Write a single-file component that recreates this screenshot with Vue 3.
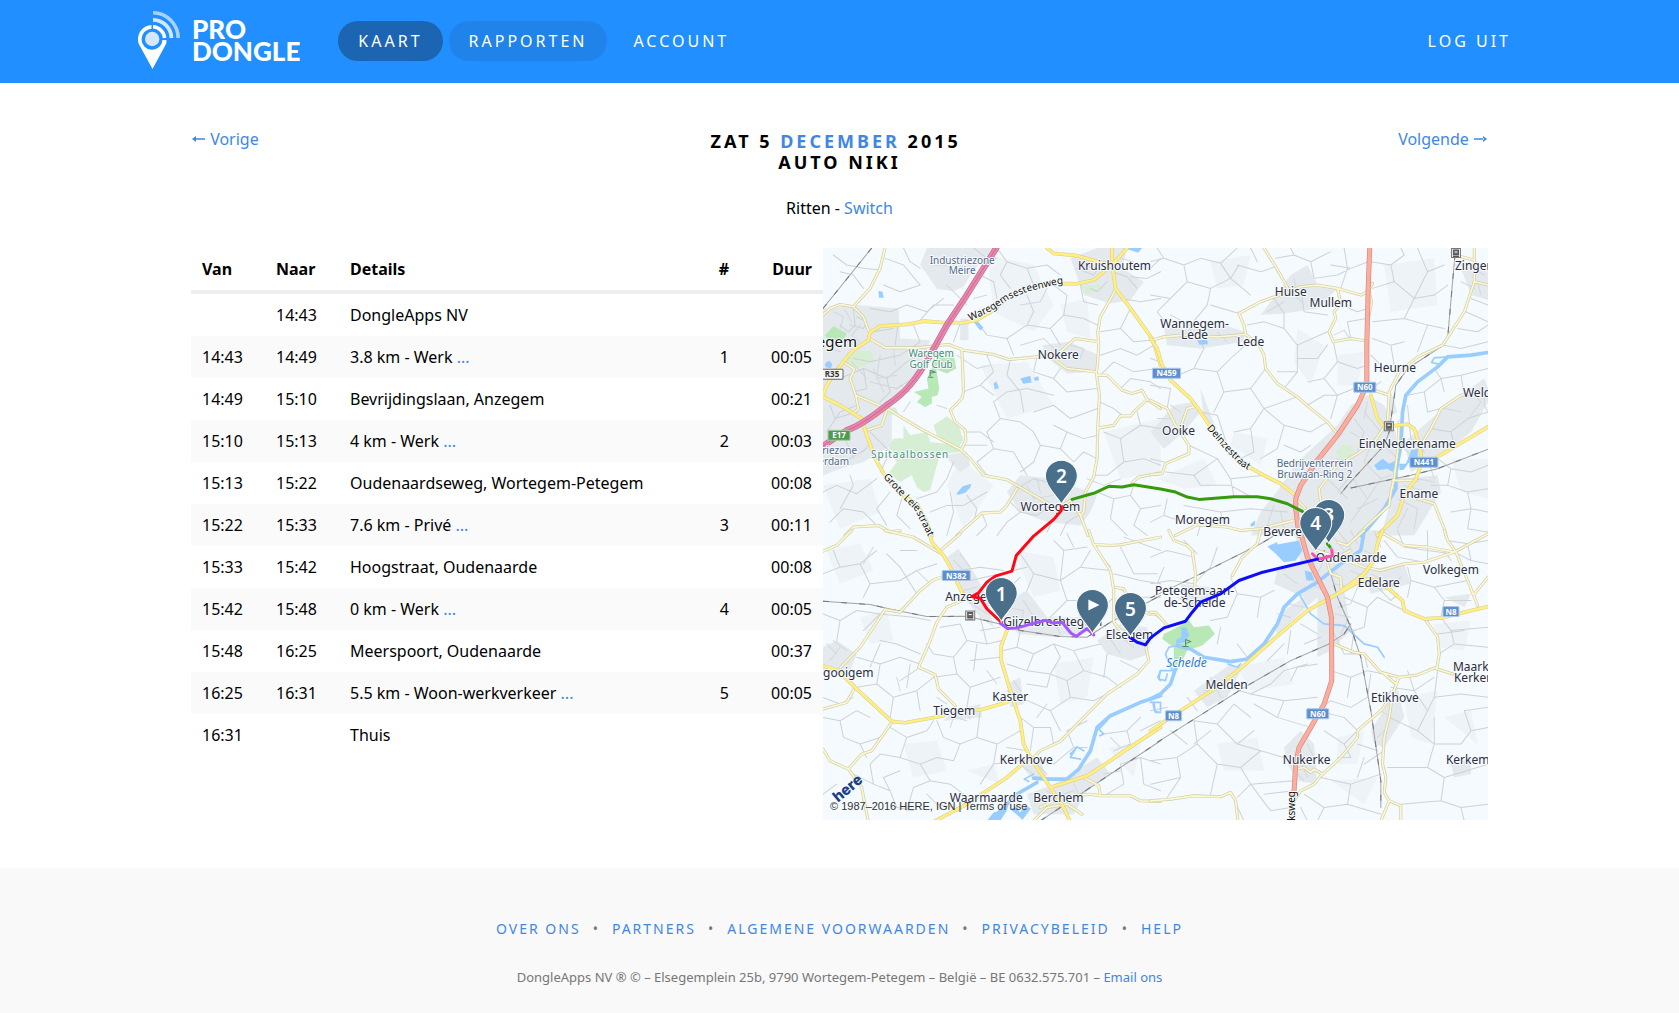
<script setup>
const trips = [
  { from: '', to: '14:43', text: 'DongleApps NV', n: '', time: '' },
  { from: '14:43', to: '14:49', text: '3.8 km - Werk', more: true, n: '1', time: '00:05' },
  { from: '14:49', to: '15:10', text: 'Bevrijdingslaan, Anzegem', n: '', time: '00:21' },
  { from: '15:10', to: '15:13', text: '4 km - Werk', more: true, n: '2', time: '00:03' },
  { from: '15:13', to: '15:22', text: 'Oudenaardseweg, Wortegem-Petegem', n: '', time: '00:08' },
  { from: '15:22', to: '15:33', text: '7.6 km - Privé', more: true, n: '3', time: '00:11' },
  { from: '15:33', to: '15:42', text: 'Hoogstraat, Oudenaarde', n: '', time: '00:08' },
  { from: '15:42', to: '15:48', text: '0 km - Werk', more: true, n: '4', time: '00:05' },
  { from: '15:48', to: '16:25', text: 'Meerspoort, Oudenaarde', n: '', time: '00:37' },
  { from: '16:25', to: '16:31', text: '5.5 km - Woon-werkverkeer', more: true, n: '5', time: '00:05' },
  { from: '16:31', to: '', text: 'Thuis', n: '', time: '' }
]

const footerLinks = ['Over ons', 'Partners', 'Algemene voorwaarden', 'Privacybeleid', 'Help']

// The map is split in four sheets, drawn at three units per pixel.
const NW = [-9, -9]
const NE = [981, -9]
const SW = [-9, 846]
const SE = [981, 846]

const sheets = [
  {
    at: NW,
    relief: 'M500 30L640 60 700 180 640 260 520 200ZM480 360L620 350 700 480 560 520ZM850 560L1020 520V680L900 700ZM9 720L150 700 180 800 60 850ZM420 640L520 720 430 850 380 720ZM720 180L800 160 810 280 740 260Z',
    urban: 'M320 9H520L460 75 430 125 400 138 350 132 325 95 300 60ZM9 190L110 180 235 190 240 280 330 285 300 380 250 420 215 470 215 600 130 650 60 670 9 690ZM750 40L830 9 920 9 905 70 970 110 930 165 870 175 790 150ZM665 300L745 290 835 330 830 380 740 385 690 345ZM560 740L600 690 700 700 830 750 810 800 780 840 680 830 600 800ZM420 220h25v65h-25zM370 630L440 620 450 660 420 680Z',
    wood: 'M250 540L270 570 320 560 330 590 420 600 425 620 360 625 350 660 330 735 310 740 290 725 275 690 240 710 205 685 230 650 205 610 220 580 250 580ZM340 540L380 513 415 540 430 585 410 610 350 570ZM80 320L150 315 165 350 110 370 75 355ZM190 495L225 485 235 505 200 510ZM785 125L830 118 850 130 800 145Z',
    park: 'M340 320L400 325 408 370 380 385 348 372 357 430 352 450 335 455 335 475 315 485 290 470 305 455 282 440 325 430 320 400 335 370ZM15 270L40 243 80 265 70 285 30 287Z',
    water: 'M175 138l12 2 4 18-14 0zM460 230l10-4 20 22-10 8zM520 415l8-7 8 20-12 5zM600 400l30-8 4 20-25 4zM640 398l14-5 2 12-12 2zM408 745l20-22 25-8-3 12-15 15-20 6zM15 355l12-8 10 10-5 12-15-3zM905 9h60l-12 14-25-8z',
    river: '',
    minor: 'M60 80L100 90 130 130M40 30L80 60 130 70 180 75M195 40L250 60 300 120 240 140 190 120M250 9L270 50 300 70M100 190L105 240 85 260 60 240M110 215L140 230 130 250 90 240M150 190L210 200 260 180 320 200 370 160M235 230L225 300M160 260L220 250M280 240L300 290 240 330 150 350 100 340M60 400L130 370 200 400 260 350 300 330M130 370L140 430 100 440M200 400L210 440 180 470M150 410L230 430 280 400M110 480L60 500 20 560M30 480L45 520 110 500M150 560L210 620 180 680M20 660L90 640 140 610M9 740L50 720 110 745 170 700M60 790L100 720 90 690M30 830L70 790 130 800 170 840M210 740L170 790 200 840M245 760L230 810 270 850M290 760L350 740 380 700 400 650M330 800L380 780 430 780 500 740M380 870L400 800 390 740M440 750L470 790 460 830M500 690L470 650 520 610 500 560 540 520 600 530 640 560M520 610L580 620 620 690M430 560L480 560 520 590M435 600L500 600M540 520L520 470 560 440 620 430 700 450M430 440L480 420 520 380 500 330M480 420L520 450M570 345L560 390 600 440 610 500M650 335L640 380 700 400 740 440 828 430M700 400L720 370M640 500L700 480 750 520 832 490M640 560L660 600 720 610 740 560 700 540M740 560L790 580 832 570M660 600L640 650 600 680M720 610L760 650 790 620 830 640M700 700L740 650M530 9L560 50 620 70 680 60 720 90M560 50L540 90 570 130M620 70L640 120M480 90L520 110 530 160M460 9L500 40 530 40M400 180L340 180 300 225M420 235L400 290M470 230L500 270 560 280 620 240 640 200 620 150M560 280L580 330M620 240L690 250 720 300M690 250L730 210 740 150 700 120M730 210L790 220 832 240M780 120L790 170 832 180M840 60L820 90 770 70M875 80L920 95 950 130M860 110L830 140 810 130M920 60L990 70 1020 40M930 95L980 100 1020 80M900 160L960 170 1020 160M930 190L900 250 840 260M900 250L940 290 990 285M840 330L900 310 950 330 1000 300M840 390L880 350 940 380 1010 370M900 430L930 400 990 410 1020 430M837 470L880 490 905 510M850 560L900 580 960 540 1020 550M900 580L910 650 860 690 825 690M910 650L970 640 1020 660M960 540L950 500M830 740L880 760 930 750 960 790 1020 780M930 750L940 720M880 760L870 820 920 870M960 790L940 840 980 870M790 800L740 830 720 870M690 780L650 810 600 800 560 830 530 870M485 803L500 840 470 870M590 730L640 700 680 710M600 800L570 770M700 820L680 860',
    minorB: 'M40 200L70 215 60 250M75 195L95 230M120 240L95 270 120 290M30 310L60 320M95 350L140 400M160 370L190 440M180 330L170 400 230 390M220 310L225 360M240 420L270 440M45 560L80 590 100 640M150 590L130 620M340 60L380 60M350 300L370 250M410 330L470 370 510 360M350 480L380 490M250 500L270 470M780 50L830 80M800 40L790 80M900 40L940 50M700 310L670 280 600 300M750 300L790 310 780 340M620 720L640 760 700 750M650 700L660 740M750 730L730 760M800 700L850 720 900 700M600 180L660 170 680 130M380 120L440 180M460 160L500 150',
    local: 'M195 9L180 70 150 130 100 185 60 178 30 190 9 210M100 185L130 215 148 262M148 280L195 308 290 308 385 298 430 315 520 328 565 343 650 335 700 330M425 315L430 440 425 460 390 495 405 530 435 555 437 585 425 610M107 450L200 490 300 550 420 612 450 640 490 690 560 703 590 720 690 778M70 350L103 372 90 400 107 450 115 490 100 505M200 495L185 540 140 555M885 135L840 215 832 260 835 300 832 350 828 385 837 450 832 550 830 640 820 695 795 740 790 800 780 810L750 765 725 780M780 810L803 870M835 290L765 280 720 320 705 345 740 370 828 380M828 390L860 390 905 435 935 445 965 435 980 462 940 500 930 512 900 512 880 540 835 548M980 462L1020 490M590 730L560 780 540 800 485 803 410 870M75 870L100 845 175 840 210 860 240 855M935 712L955 695 1020 683',
    main: 'M680 9L700 25 770 32 840 52 875 60L820 105 770 116 690 115 600 140 560 160 520 195 470 225 430 233 360 232 310 228 260 238 180 243 150 262 145 285 100 315 70 350 40 390 20 420 9 450M875 9V55L885 130 930 190 998 285 1020 360M920 9L875 60M9 455L60 480 125 520 140 570 165 640 200 700 240 745 290 775 320 830 335 870',
    motor: 'M528 9L430 165 380 240 330 330C290 400 260 440 200 480C150 520 110 545 80 555L9 602',
    trunk: '',
    rail: 'M155 9L9 190'
  },
  {
    at: NE,
    relief: 'M440 250L520 300 480 420 430 350ZM180 50L300 30 280 120 200 130ZM700 60L850 40 860 180 720 200ZM250 560L350 580 330 660 240 600ZM900 640L1011 640V760L930 740ZM20 700L160 640 200 720 100 730ZM560 330L640 320 620 420 560 420Z',
    urban: 'M330 210L420 90 470 60 500 120 560 130 500 190 400 205ZM385 730L440 650 560 540 600 480 650 450 700 480 735 560 740 640 730 740 640 870 300 870 330 800ZM40 250L220 240 280 260 280 290 150 310 50 300ZM720 440L740 500 700 520ZM0 560L70 480 130 470 150 500 100 560 40 610ZM760 590L900 470 1000 400 1011 430V470L960 560 860 640 780 680ZM740 700L860 690 870 740 790 870H690ZM930 70L1011 60V165L960 150ZM150 430L200 560 160 520Z',
    wood: 'M555 620L580 597 608 605 605 635 570 648Z',
    park: '',
    water: 'M670 660l25-20 20 15 20-10 10 20-15 5-5 10-15-10-30 5zM745 655l20 0 16-40 20-5 0 25-28 18-15 20-12 2zM140 285l30-2 2 14-25 2zM300 835l14-10-2 15-12 4z',
    river: 'M1011 322L960 330 890 335 860 365 800 410 765 450 755 500 750 600 735 680 735 730 700 790 650 850 630 870',
    stream: 'M890 335L850 338 842 352 860 356',
    minor: 'M0 50L40 40 100 60 150 40 210 55 260 9M40 40L20 9M100 60L110 110 60 160 20 200M110 110L180 130 240 100 265 60M180 130L170 180 120 240M240 100L300 150M210 55L240 100M260 60L330 80 375 65M300 9L320 50M375 40L430 30 480 50 540 20M480 50L490 100M420 9L430 30M540 60L600 70 652 50M490 100L560 90 600 70M580 9L590 70 570 130M20 200L60 250M120 240L60 210M180 180L265 205M0 150L60 160M290 240L340 230 400 250 440 300 530 260M400 250L400 205 370 160M440 300L440 380 400 430M440 380L380 380M530 300L500 340 440 340M548 290L560 350 620 370 648 360M560 350L520 400 470 410M520 400L560 450 610 430M470 480L520 450 560 450M560 450L540 520M570 180L620 200 650 190M450 130L460 200 530 210M600 280L590 230 648 220M60 400L130 370 160 310 150 290M130 370L200 380 240 340 285 300M200 380L220 440 190 500M220 440L300 430 345 370M300 430L340 490 300 550 250 560M340 490L440 455M340 490L400 540 380 610 330 640M400 540L480 560 530 530M300 550L310 620 270 640M400 600L450 620 480 600M0 340L30 350M0 420L60 430 50 490M150 500L200 510 230 600M115 600L200 640 240 700 340 690M200 640L130 690 45 680M130 690L150 720 240 720 300 754M240 700L250 754M0 640L40 650M50 760L40 810 100 830M40 810L0 830M100 780L210 800 300 790 410 800M210 800L220 840M150 840L140 870M660 50L720 60 760 30 750 9M720 60L730 110 665 130M730 110L790 160 760 220 665 230M790 160L850 150 890 120M760 220L830 240 880 250M830 240L800 320M665 280L720 300 760 290M720 300L730 360M880 60L830 80 790 160M830 80L800 9M960 60L910 60M960 160L1011 180M945 200L1011 230M920 250L980 260 1011 240M880 300L930 310 1011 290M660 330L700 370M690 410L660 430M770 450L820 440 870 400 850 370M820 440L830 500 870 490M870 400L930 390 1011 370M930 390L940 450M880 440L870 400M840 550L900 560 950 520 1011 500M900 560L910 600M860 640L900 670 960 680 1011 660M900 670L890 720 840 720M890 720L950 740 1011 730M950 740L960 790 900 800M960 790L1011 800M960 790L950 850 1011 860M820 620L780 580 770 480',
    minorB: 'M610 520L640 560 620 620M640 500L690 560M600 560L660 600 640 650M650 470L640 520M560 640L600 690 560 740M640 650L690 700 650 760M600 690L650 760 600 830M530 700L590 760M480 700L500 640M450 700L400 690M620 790L680 760M690 700L720 690M700 600L740 640M760 610L790 640M830 640L850 700M760 720L830 740M740 760L800 790 790 850M800 700L850 710M770 790L740 850M430 100L440 150M400 110L450 170M350 200L400 170M950 60L1000 90M980 110L990 150M930 110L970 130M550 270L580 255 600 285M110 240L130 270M200 260L230 290M60 480L90 500M20 520L60 520M880 490L930 500M960 440L990 470 960 510M1000 440L1000 480 1011 500M400 850L390 800M350 840L370 780',
    local: 'M340 9L375 65 415 135M265 205L330 170 380 152 450 125 500 120 560 130 630 150 650 140 665 115M560 130L570 175 550 200 555 220 535 260 548 290 600 280 648 288M265 205L280 240 285 268 200 275 100 270 40 275 5 285M285 268L325 300 340 330 345 370 380 415 440 455 480 490 530 530 555 560M655 140L662 170 655 210M970 9L970 110 940 200 875 300 800 335 745 380 715 440 710 530M670 435L715 450M970 110L1011 120M700 545L670 590 620 625 560 660 505 730 510 770M1011 435L930 450 870 490 840 550 810 600M745 530L740 620 730 700 720 740 715 780 650 840 620 870M725 705L800 705M800 760L850 775 880 850 885 870M0 465L50 490 75 540 115 600 115 625 45 655 35 685 0 688M130 485L110 490 90 545M75 870L140 838 230 845 270 855 330 850 430 825M970 45L930 35M435 760L465 790',
    main: 'M0 280L20 310 35 360 60 405 120 460 150 500 180 545 230 610 260 645 340 690 390 715 435 750M660 450L680 520 700 545 770 537 790 550 803 590 810 625 810 660 795 700 760 750 740 810 680 870M1011 545L860 635',
    motor: '',
    trunk: 'M657 0L652 130 648 300 648 420 620 480 560 570 500 645 450 720 435 760 435 790 445 870',
    rail: 'M912 30L890 280 870 305 770 370 735 420 715 560 700 600 590 720 570 745M600 728L780 690 860 670 1011 612'
  },
  {
    at: SW,
    relief: 'M20 60L120 40 160 120 60 160ZM580 60L700 80 720 180 640 200ZM700 400L820 380 800 500 720 520ZM250 640L350 630 380 720 280 740ZM860 650L960 640 940 740ZM440 720L520 700 540 760ZM120 260L200 240 220 330 150 340Z',
    urban: 'M380 80L415 55 470 140 500 200 520 290 480 260 430 200 400 150ZM560 210L620 180 680 260 800 260 830 300 700 320 600 310 540 280ZM830 330L900 280 980 290 985 370 930 390 860 370ZM9 350L50 330 110 370 90 420 9 420ZM400 540L480 520 485 560 370 570ZM560 460L600 440 610 520 570 530ZM620 790L700 760 830 680 870 730 800 780 760 850H640ZM600 700L660 690 680 740 640 750Z',
    wood: '',
    park: '',
    water: 'M500 870l20-25 20-5 10-20 15-2-5 20-20 32zM570 835l20-8 8 18 20-20 14 8-25 34z',
    river: 'M1020 495L960 515 870 555 830 590 810 660 775 715 740 745 680 745 640 742M650 755L590 790 520 860',
    stream: 'M640 730L612 745 625 752M860 570L835 595 850 610 838 615M750 670L770 648 790 660M770 648L750 680 780 685M1000 515L1005 545 1020 545M1020 420L1012 440 1020 450',
    minor: 'M9 130L60 110 120 100 170 60M120 100L150 160 240 150 290 120M150 160L130 200M60 110L40 60M290 120L350 100M200 70L240 110 290 190 240 240M240 60L290 60M9 250L60 270 110 240 180 250M60 270L50 330M130 300L180 250 280 260 330 270M180 330L230 340 300 370M110 380L180 400 240 380 300 400M180 400L170 460 220 500 290 480 340 440M170 460L110 470M220 500L210 560M290 480L300 540M270 400L260 470M300 410L240 450M340 440L410 430 450 470 540 440M410 430L400 380 440 330 420 280M440 330L500 340 545 330M400 380L340 370 320 340M360 290L420 280M450 470L440 530M450 390L540 380M480 260L500 340M470 340L460 420M550 120L480 110 420 120M600 70L640 130 720 150 780 110 810 60M640 130L620 180M720 150L730 60 700 30M730 60L800 50M740 9L760 50M580 120L620 110M720 150L740 210 690 260M740 210L820 210M780 110L870 120M880 200L830 250M600 300L590 350 550 360M590 350L640 370 700 340 720 380 690 430 620 420 560 400M640 370L620 420M700 340L760 360 840 340M760 360L790 420 740 450 690 430M790 420L860 440 900 470M740 450L750 500 690 540 600 500M690 540L720 600M750 500L820 510 860 490M620 460L680 470 690 430M600 560L640 590 690 590 700 640M640 590L630 660M860 370L850 440M900 390L960 420M910 20L1020 60M830 60L870 110M900 50L940 130 1010 130M880 130L960 150 1020 160M890 170L940 200 1020 200M9 560L60 570 110 540 150 560M60 570L70 620 120 640 140 680M120 640L180 620M9 500L60 520 100 500M210 590L260 620 320 600 340 570M260 620L240 680 300 700 330 750M240 680L180 670 150 700 160 760M300 700L350 680 400 690 420 640 370 620 350 570M420 640L470 620 480 540M470 620L530 640 600 600M530 640L520 700 480 760M520 700L600 690M330 750L280 770 260 840M330 750L390 760 430 790M160 760L210 780 230 830 280 840M210 780L190 740 240 720M100 730L160 760M9 790L50 760M620 660L560 650M700 700L760 650 740 600 800 570M760 650L800 650M850 610L920 600 960 560M920 600L930 640 880 660M960 600L1020 570M900 700L960 680 1020 700M900 700L910 760 860 790M960 680L970 760 1020 780M850 730L900 720M540 290L480 300M560 180L600 140M450 150L540 130M180 340L150 410',
    minorB: 'M20 340L50 370M40 330L80 360M60 350L30 390M400 90L440 130M420 70L450 110M430 180L470 170M440 210L500 250M560 230L610 240 600 280M610 210L640 260M700 270L720 310M860 310L900 370M880 300L940 350M370 550L440 570M420 530L450 565M400 560L390 590M560 480L590 500M580 450L600 480M640 790L680 820M680 780L730 820M760 760L780 800M700 800L760 780M650 700L680 730M610 710L640 730M290 120L330 160M130 100L160 50M240 480L230 440M350 500L380 520M500 420L530 460M650 560L680 520M870 620L900 650M320 790L350 820 400 830',
    local: 'M195 0L280 20 355 65M355 65L420 10M9 62L50 45 95 0M365 140L340 148 300 180 240 245 195 237 160 290 120 350 60 412M440 205L380 230 350 275 330 330 295 410 345 432 355 475 405 525M805 0L820 42 870 45 900 43 1020 20M820 42L870 120 880 180 880 275 900 300 935 310M885 170L910 175 925 210M945 225L985 250 1005 250 1020 262M975 343L985 390 950 430 860 490 800 550 720 632 660 660 640 680M9 535L80 515 105 470M215 575L155 660 125 670 85 715 30 690 9 655M85 715L125 770 140 850 145 870M790 740L835 765 840 795 810 790 720 800 660 830M840 795L930 795 960 810 1020 812M560 290L543 275M640 870L680 830 740 820 785 850',
    main: 'M325 0L335 35 370 75 390 110 425 185 440 205M560 300L543 345 543 390 570 480 600 570 610 640 630 680 690 770 730 830 748 870M9 405L55 420 105 470 215 572 255 576 370 555M465 538H480L560 515M630 680L560 740 500 780 430 825 345 870M690 770L800 735 870 690 920 655 1020 590',
    motor: '',
    trunk: '',
    rail: 'M9 212L150 222 230 240 320 258 440 257 540 280 600 300 720 318 800 320 870 275 1020 195M660 870L1020 630'
  },
  {
    at: SE,
    relief: 'M760 500L860 480 840 640 780 620ZM560 620L640 600 620 700 560 700ZM200 640L320 620 340 720 220 720ZM880 560L960 540 980 640ZM260 410L400 380 430 460 300 480ZM850 280L960 270 940 360 860 350ZM540 750L680 740 640 820Z',
    urban: 'M430 0H700L660 100 640 150 580 180 600 300 540 360 500 380 500 200 380 310 370 290 400 240 460 200 370 160 380 120 450 100ZM130 480L240 400 270 420 230 500 170 530ZM400 650L450 600 490 640 500 760 440 750 410 700ZM660 600L740 470 760 560 700 650 670 640ZM640 120L760 100 780 160 660 190ZM880 200L960 190 940 230ZM900 700L960 680 960 730 910 740ZM90 160L180 170 200 210 110 240Z',
    wood: '',
    park: 'M40 310L80 290 115 268 130 290 175 285 193 310 155 345 110 360 80 420 70 390 70 350 35 325Z',
    water: 'M350 48L380 35 380 42 445 30 455 60 435 90 400 95 375 70ZM462 120l20 5 10 25-25 0zM92 290l15 0 10 25-15 20-25 5 0-12 15-8z',
    river: 'M640 0L630 60 570 100 500 155 440 190 400 230 380 280 340 340 290 385 240 393 160 380 120 355 80 345M75 415L60 460 30 490 0 505',
    stream: 'M445 190L480 250 520 280 580 285 640 340 680 350 700 380M80 345L55 350 45 370 60 410 70 420 30 420 25 445 45 450 50 430M232 400L260 410 270 400M0 515L30 515 30 540M8 520L12 540 25 545',
    minor: 'M100 30L140 70M0 80L50 60 130 80M240 140L260 190 230 260 180 270M260 190L330 200 370 180M330 200L320 260M200 50L180 110 140 150M40 110L20 160M0 160L60 150 130 160M210 290L200 340M290 380L260 340M200 460L300 490 400 510 500 500M300 490L360 460 400 420 470 400M400 510L380 560 480 590M380 560L310 520M300 560L250 520M250 520L200 580 130 570M200 580L260 640 400 680M260 640L310 600M130 570L140 640 80 680 0 690M140 640L200 700 180 790M80 680L90 740 50 800M90 740L0 760M200 700L270 710 300 760 430 750M270 710L330 660M300 760L260 800M300 760L360 840 420 830M180 600L130 640M60 600L110 640M110 500L140 540M0 540L50 530M500 400L440 410 420 450M500 540L580 560 620 600M500 540L540 510 600 530 650 500 660 430M540 420L600 440 650 420 700 430M600 440L590 500M560 280L610 300 640 290M545 300L580 370 640 370M640 370L650 410M580 200L650 230 680 200 760 240M650 230L640 290M680 170L720 210 740 190M750 140L720 170M770 110L780 150 850 170 950 150M780 150L770 200M850 170L880 210 870 260 830 270M880 210L960 210M700 30L740 80 820 95M740 0L760 50 830 60M830 60L900 70M830 0L830 95M890 30L950 40 1011 30M950 40L960 90 910 65M960 90L1011 100M900 90L880 60M940 300L860 310M870 260L900 300 1011 290M900 300L910 340 1011 350M910 340L865 370M850 500L860 420M720 470L790 480 850 440M790 480L830 540 850 500 930 490 1011 500M830 540L800 600 715 560M800 600L850 640 930 640M850 640L850 560M850 640L830 710 880 740 1011 700M830 710L710 710M880 740L870 810 750 820M870 810L930 830 1011 820M930 830L940 870M930 640L960 600 1011 590M960 600L940 540 1011 530M620 640L680 660M620 600L580 640 600 680M580 640L520 600M510 740L600 760 690 730M600 760L590 820 690 850M590 820L520 830 500 870M520 830L460 790M240 785L280 870M430 780L340 790M450 830L470 870M640 680L620 740M700 660L640 700M560 680L600 680M770 420L790 480M600 370L610 300M450 280L500 310M460 340L510 320M380 250L420 260M400 340L350 390M420 300L410 370',
    minorB: 'M540 10L580 60M560 0L600 50 560 90M600 0L620 40M520 50L560 70M520 90L500 130M480 160L520 180M550 160L600 170M530 110L560 130M560 230L600 220 620 170M550 250L600 260M590 270L570 310M640 60L680 80M660 130L700 150 690 180M600 120L640 140M400 130L440 160M410 220L460 230M450 690L470 740M440 730L460 750M470 640L490 680M720 480L700 520M690 540L720 560M700 600L680 620M160 480L220 470M180 440L210 500M100 180L170 230M80 200L130 230M670 0L690 50',
    local: 'M125 60L135 130 132 170M245 135L275 80 320 40 330 0M55 0L70 30 110 45 125 60M0 245L15 245 55 290M545 338L610 365 640 370 690 425 745 440 800 433 850 412 905 430M825 270L860 320 865 370 858 412M745 440L725 490 715 560 700 620 695 700 705 740 700 785 715 810 690 870M715 810L750 825 750 870M700 430L735 460 745 440M720 500L690 540 620 600 620 620 570 680 510 735 490 760 450 780 430 810M435 715L460 710 480 725 490 715 515 730M640 110L690 120 760 100 820 95 910 65 1011 10M880 0L890 30 915 65 950 150 980 225M690 5L760 45 830 50 910 65M970 190L1011 140M0 810L60 805 130 795 210 798 240 785 255 810 262 870M530 100L540 130 570 140 572 185M560 35L590 45 640 0M560 80L600 60M500 60L560 80 640 110',
    main: 'M695 0L680 40 670 90 640 130 560 190 470 240 370 325 280 405 190 475 90 540 0 600M560 190L640 145 680 150 720 180 755 210 760 240 820 265 870 262 1011 228',
    motor: '',
    trunk: 'M448 0L470 80 530 200 542 260 543 450 520 520 480 590 445 650 435 700 430 780 420 870',
    rail: 'M0 202L130 140 330 40 380 10M20 635L290 465 420 390 535 340 580 310 600 280M520 60L560 200 600 290 630 380 660 540 690 750 690 830'
  }
]

const place = (items) =>
  items.map(([at, x, y, text, kind, side]) => ({
    x: Math.round((x + at[0]) / 3),
    y: Math.round((y + at[1]) / 3),
    text,
    kind,
    side
  }))

const labels = place([
  [NW, 427, 56, 'Industriezone', 'zone'],
  [NW, 427, 88, 'Meire', 'zone'],
  [NW, 881, 74, 'Kruishoutem', 'town'],
  [NW, 713, 342, 'Nokere', 'town'],
  [NW, 112, 305, 'egem', 'city', 'end'],
  [NW, 334, 335, 'Waregem', 'green'],
  [NW, 333, 368, 'Golf Club', 'green'],
  [NW, 271, 638, 'Spitaalbossen', 'green wide'],
  [NW, 112, 627, 'riezone', 'zone', 'end'],
  [NW, 86, 660, 'erdam', 'zone', 'end'],
  [NW, 690, 797, 'Wortegem', 'town'],
  [NE, 421, 152, 'Huise', 'town'],
  [NE, 541, 187, 'Mullem', 'town'],
  [NE, 131, 249, 'Wannegem-', 'town'],
  [NE, 132, 283, 'Lede', 'town'],
  [NE, 301, 302, 'Lede', 'town'],
  [NE, 731, 381, 'Heurne', 'town'],
  [NE, 936, 455, 'Weld', 'town', 'start'],
  [NE, 913, 74, 'Zingem', 'town', 'start'],
  [NE, 83, 569, 'Ooike', 'town'],
  [NE, 661, 608, 'Eine', 'town'],
  [NE, 805, 608, 'Nederename', 'town'],
  [NE, 493, 666, 'Bedrijventerrein', 'zone'],
  [NE, 491, 698, 'Bruwaan-Ring 2', 'zone'],
  [NE, 805, 758, 'Ename', 'town'],
  [NE, 155, 836, 'Moregem', 'town'],
  [NE, 395, 872, 'Bevere', 'town'],
  [SW, 375, 209, 'Anzegem', 'town', 'start'],
  [SW, 550, 284, 'Gijzelbrechtegem', 'town', 'start'],
  [SW, 928, 323, 'Elsegem', 'town'],
  [SW, 10, 437, 'gooigem', 'town', 'start'],
  [SW, 403, 551, 'Tiegem', 'town'],
  [SW, 570, 511, 'Kaster', 'town'],
  [SW, 619, 700, 'Kerkhove', 'town'],
  [SW, 498, 814, 'Waarmaarde', 'town'],
  [SW, 714, 814, 'Berchem', 'town'],
  [SE, 131, 192, 'Petegem-aan-', 'town'],
  [SE, 132, 227, 'de-Schelde', 'town'],
  [SE, 107, 409, 'Schelde', 'stream-name'],
  [SE, 228, 473, 'Melden', 'town'],
  [SE, 494, 95, 'Oudenaarde', 'town', 'start'],
  [SE, 684, 169, 'Edelare', 'town'],
  [SE, 899, 131, 'Volkegem', 'town'],
  [SE, 907, 419, 'Maarke-', 'town', 'start'],
  [SE, 909, 453, 'Kerkem', 'town', 'start'],
  [SE, 733, 512, 'Etikhove', 'town'],
  [SE, 469, 700, 'Nukerke', 'town'],
  [SE, 886, 700, 'Kerkem', 'town', 'start']
])

const shields = place([
  [NE, 48, 384, 'N459', 'n'],
  [NE, 643, 426, 'N60', 'n'],
  [NE, 818, 651, 'N441', 'n'],
  [SW, 408, 135, 'N382', 'n'],
  [SE, 70, 556, 'N8', 'n'],
  [SE, 501, 549, 'N60', 'n'],
  [SE, 901, 243, 'N8', 'n'],
  [NW, 35, 387, 'R35', 'r'],
  [NW, 56, 571, 'E17', 'e']
]).map((s) => ({ ...s, w: s.text.length * 6 + 4 }))

const stations = place([
  [NE, 915, 24],
  [NE, 714, 542],
  [SW, 450, 255]
])

const pins = place([
  [NW, 723, 775, '2'],
  [SW, 543, 270, '1'],
  [SW, 816, 305, ''],
  [SW, 930, 314, '5'],
  [SE, 533, 35, '3'],
  [SE, 495, 60, '4']
])

const routes = [
  { at: NW, color: '#359b0c', d: 'M755 762L825 742 865 723 905 725 940 718 1020 731 1065 740 1100 755 1135 762 1240 754 1310 754 1350 760 1400 775 1445 798' },
  { at: NW, color: '#ff0a14', d: 'M723 782V795L700 822 640 872 588 930 575 977 525 992 500 1010 475 1042 455 1053 480 1058 500 1090 543 1130' },
  { at: SW, color: '#a657ff', d: 'M540 278L562 294 590 292 675 269 695 277 725 275 752 308 768 317 800 294 820 313' },
  { at: SE, color: '#ff4fae', d: 'M485 70L500 85 510 85 545 75 543 58' },
  { at: SE, color: '#359b0c', d: 'M530 40L538 50' },
  { at: SW, color: '#0c0cff', d: 'M928 320L950 335 975 343 990 322 1030 292 1095 272 1115 245 1140 215 1200 190 1255 150 1320 127 1410 105 1490 86' }
]

const move = (at) => `translate(${at[0]} ${at[1]})`
</script>

<template>
  <div class="page">
    <header class="top">
      <div class="top-inner">
        <a class="logo" href="#" aria-label="Pro Dongle">
          <svg width="42" height="58" viewBox="0 0 42 58" aria-hidden="true">
            <path d="M15 1.800A25.500 25.500 0 0 1 40.200 27" fill="none" stroke="#a6d2ff" stroke-width="3.600" />
            <path d="M15 8.800A18.500 18.500 0 0 1 33.400 27" fill="none" stroke="#d3e8ff" stroke-width="3.800" />
            <path d="M15 15.800A12.300 12.300 0 0 1 26.600 27" fill="none" stroke="#fff" stroke-width="3.600" />
            <path fill="#fff" fill-rule="evenodd" d="M13.500 14A14.200 14.200 0 0 0 .8 33L14.500 58 28 33Q28.800 31 28.300 29H24.500A10.500 10.500 0 1 1 13.500 17.800Z" />
            <circle cx="14.200" cy="28" r="7.200" fill="#d3e8ff" />
          </svg>
          <span class="logo-name">PRO<br />DONGLE</span>
        </a>
        <nav class="nav">
          <a class="pill current" href="#">Kaart</a>
          <a class="pill hover" href="#">Rapporten</a>
          <a class="pill" href="#">Account</a>
        </nav>
        <a class="pill logout" href="#">Log uit</a>
      </div>
    </header>

    <main class="content">
      <div class="day">
        <a class="step" href="#"><svg class="arrow" viewBox="0 0 15 12" aria-hidden="true"><path d="M5 3V9L1 6ZM4 5.200H14V6.800H4Z" /></svg> Vorige</a>
        <h1>Zat 5 <a href="#">december</a> 2015&nbsp;<br />Auto Niki</h1>
        <a class="step next" href="#">Volgende <svg class="arrow" viewBox="0 0 15 12" aria-hidden="true"><path d="M10 3V9L14 6ZM1 5.200H11V6.800H1Z" /></svg></a>
      </div>
      <p class="mode">Ritten - <a href="#">Switch</a></p>

      <div class="split">
        <table class="trips">
          <thead>
            <tr>
              <th class="time">Van</th>
              <th class="time">Naar</th>
              <th>Details</th>
              <th class="num">#</th>
              <th class="dur">Duur</th>
            </tr>
          </thead>
          <tbody>
            <tr v-for="(t, i) in trips" :key="i">
              <td>{{ t.from }}</td>
              <td>{{ t.to }}</td>
              <td>{{ t.text }} <a v-if="t.more" href="#">...</a></td>
              <td class="num">{{ t.n }}</td>
              <td class="dur">{{ t.time }}</td>
            </tr>
          </tbody>
        </table>

        <figure class="map">
          <svg class="map-art" viewBox="0 0 664 572" preserveAspectRatio="xMinYMin slice" role="img" aria-label="Kaart">
            <defs>
              <path id="way-waregem" d="M147 73L170 62 186 51 206 43 236 36 252 34" />
              <path id="way-leie" d="M60 229L78 248 92 262 104 286 113 306" />
              <path id="way-deinze" d="M383 180L403 203 418 218 440 230" />
            </defs>
            <g transform="scale(.333333)">
              <g v-for="(s, i) in sheets" :key="'g' + i" :transform="move(s.at)">
                <path class="relief" :d="s.relief" />
                <path class="urban" :d="s.urban" />
                <path class="wood" :d="s.wood" />
                <path class="park" :d="s.park" />
              </g>
              <g v-for="(s, i) in sheets" :key="'m' + i" :transform="move(s.at)">
                <path class="line minor" :d="s.minor" />
                <path class="line minor small" :d="s.minorB" />
                <path class="water" :d="s.water" />
                <path class="line river" :d="s.river" />
                <path class="line stream" :d="s.stream" />
                <path class="line rail" :d="s.rail" />
                <path class="line rail dash" :d="s.rail" />
              </g>
              <g v-for="(s, i) in sheets" :key="'r' + i" :transform="move(s.at)">
                <path class="line local-edge" :d="s.local" />
                <path class="line local" :d="s.local" />
                <path class="line main-edge" :d="s.main" />
                <path class="line main" :d="s.main" />
                <path class="line motor-edge" :d="s.motor" />
                <path class="line motor" :d="s.motor" />
                <path class="line motor-mid" :d="s.motor" />
                <path class="line trunk-edge" :d="s.trunk" />
                <path class="line trunk" :d="s.trunk" />
              </g>
            </g>

            <g v-for="(s, i) in stations" :key="'s' + i" :transform="`translate(${s.x} ${s.y})`">
              <rect x="-4.500" y="-4.500" width="9" height="9" fill="#eee" stroke="#777" />
              <path d="M-2.500-3H2.500V2H-2.500ZM-3 3.500H3" fill="#666" stroke="#555" />
              <path d="M-1.500-1H1.500" stroke="#fff" />
            </g>

            <text v-for="(l, i) in labels" :key="'l' + i" :class="['label', l.kind, l.side]" :x="l.x" :y="l.y">{{ l.text }}</text>
            <text class="label road"><textPath href="#way-waregem">Waregemsesteenweg</textPath></text>
            <text class="label road"><textPath href="#way-leie">Grote Leiestraat</textPath></text>
            <text class="label road"><textPath href="#way-deinze">Deinzestraat</textPath></text>
            <text class="label road" transform="translate(471 572) rotate(-90)">ksweg</text>

            <g v-for="(s, i) in shields" :key="'h' + i" :class="['shield', s.kind]" :transform="`translate(${s.x} ${s.y})`">
              <rect :x="-s.w / 2" y="-5" :width="s.w" height="10" rx="1" />
              <text y="3">{{ s.text }}</text>
            </g>

            <path d="M107 122V128M107 122L112 124 107 125M105 129H110" fill="none" stroke="#4f8f70" />
            <path d="M362 391V398M362 391L367 393 362 395M359 398H365" fill="none" stroke="#4f8f70" />

            <g transform="scale(.333333)">
              <path v-for="(r, i) in routes" :key="'t' + i" class="line route" :transform="move(r.at)" :d="r.d" :stroke="r.color" />
            </g>

            <g v-for="(p, i) in pins" :key="'p' + i" class="pin" :transform="`translate(${p.x} ${p.y})`">
              <path class="pin-body" d="M0 1C-2-5-16-16-16-27A16 16 0 0 1 16-27C16-16 2-5 0 1Z" />
              <text v-if="p.text" y="-20">{{ p.text }}</text>
              <path v-else d="M-4-33L7-27.500-4-22Z" fill="#fff" />
            </g>

            <text class="here" transform="translate(15 554) rotate(-40)">here</text>
          </svg>
          <figcaption>© 1987–2016 HERE, IGN | <a href="#">Terms of use</a></figcaption>
        </figure>
      </div>
    </main>

    <footer class="bottom">
      <nav class="bottom-nav">
        <template v-for="(l, i) in footerLinks" :key="l">
          <span v-if="i">•</span>
          <a href="#">{{ l }}</a>
        </template>
      </nav>
      <p>DongleApps NV ® © – Elsegemplein 25b, 9790 Wortegem-Petegem – België – BE 0632.575.701 – <a href="#">Email ons</a></p>
    </footer>
  </div>
</template>

<style>
body {
  margin: 0;
  background: #fff;
}
</style>

<style scoped>
.page {
  display: flex;
  flex-direction: column;
  min-height: 100vh;
  font-family: "Noto Sans", sans-serif;
  font-size: 16px;
  line-height: 22px;
  color: #000;
}
a {
  color: #3f87e5;
  text-decoration: none;
}
.top {
  background: #218fff;
}
.top-inner {
  display: flex;
  align-items: center;
  box-sizing: border-box;
  max-width: 1403px;
  height: 83px;
  margin: 0 auto;
  padding-bottom: 1px;
}
.logo {
  display: flex;
  align-items: center;
  gap: 12px;
  height: 60px;
  padding-bottom: 3px;
  color: #fff;
}
.logo-name {
  font: 900 26px/22px Lato, sans-serif;
}
.nav {
  display: flex;
  gap: 6px;
  margin-left: 38px;
}
.pill {
  padding: 0 20px;
  border-radius: 20px;
  line-height: 40px;
  letter-spacing: 3px;
  text-transform: uppercase;
  color: #fff;
}
.current {
  background: #1b65b3;
}
.hover {
  background: #2083e9;
}
.logout {
  margin-left: auto;
  margin-right: 10px;
}
.content {
  width: 100%;
  max-width: 1297px;
  margin: 0 auto;
  padding: 45px 0 48px;
}
.day {
  display: grid;
  grid-template-columns: 1fr auto 1fr;
}
.next {
  text-align: right;
}
.arrow {
  width: 15px;
  height: 12px;
  fill: currentColor;
}
h1 {
  margin: 3px 0 0;
  font-size: 18px;
  line-height: 21px;
  letter-spacing: 3px;
  text-align: center;
  text-transform: uppercase;
}
.mode {
  margin: 24px 0 29px;
  text-align: center;
}
.split {
  display: grid;
  grid-template-columns: 632fr 665fr;
  align-items: start;
}
.trips {
  width: 100%;
  border-collapse: separate;
  border-spacing: 0;
  table-layout: fixed;
}
th,
td {
  box-sizing: border-box;
  height: 42px;
  padding: 0 11px;
  text-align: left;
}
thead th {
  height: 46px;
  border-bottom: 4px solid #eee;
}
.time {
  width: 74px;
}
.num {
  width: 86px;
  padding-right: 30px;
  text-align: right;
}
.dur {
  width: 64px;
  padding-left: 0;
  text-align: right;
}
tbody tr:nth-child(even) {
  background: #fafafa;
}
.map {
  position: relative;
  height: 572px;
  margin: 0;
  overflow: hidden;
  background: #f4fafd;
}
.map-art {
  display: block;
  width: 100%;
  height: 100%;
}
figcaption {
  position: absolute;
  left: 7px;
  bottom: 6px;
  font: 11px/16px "Liberation Sans", Arial, sans-serif;
  color: #333;
}
figcaption a {
  color: #333;
}
.relief { fill: #edf3f6; }
.urban { fill: #e4e9ed; }
.wood { fill: #d6eed3; }
.park { fill: #b8e8b5; }
.water { fill: #99cdff; }
.line {
  fill: none;
  stroke-linejoin: round;
  stroke-linecap: round;
}
.minor { stroke: #cdd2d5; stroke-width: 3; }
.small { stroke: #d4d8db; }
.river { stroke: #99cdff; stroke-width: 11; }
.stream { stroke: #99cdff; stroke-width: 5; }
.rail { stroke: #a3a3a3; stroke-width: 3; }
.dash { stroke: #777; stroke-width: 3; stroke-dasharray: 18 36; stroke-linecap: butt; }
.local-edge { stroke: #cfccb0; stroke-width: 9; }
.local { stroke: #fdf9cc; stroke-width: 5; }
.main-edge { stroke: #d9cb92; stroke-width: 11; }
.main { stroke: #ffee80; stroke-width: 8; }
.motor-edge { stroke: #c26c91; stroke-width: 19; }
.motor { stroke: #e887ae; stroke-width: 15; }
.motor-mid { stroke: #d46b98; stroke-width: 3; }
.trunk-edge { stroke: #d9897d; stroke-width: 15; }
.trunk { stroke: #fbad9f; stroke-width: 11; }
.route { stroke-width: 9; }
.label {
  font-size: 12px;
  fill: #2d2d3f;
  stroke: #f6fbfd;
  stroke-width: 2px;
  stroke-linejoin: round;
  paint-order: stroke;
  text-anchor: middle;
}
.label.start { text-anchor: start; }
.label.end { text-anchor: end; }
.label.zone { font-size: 10px; fill: #55698a; }
.label.green { font-size: 10px; fill: #4b8b77; }
.label.wide { letter-spacing: 1px; }
.label.city { font-size: 15px; fill: #111; }
.label.stream-name { font-size: 12px; font-style: italic; fill: #3578c4; }
.label.road { font-size: 10px; fill: #111; text-anchor: start; }
.shield rect { stroke-width: 1; }
.shield text {
  font-size: 8px;
  font-weight: 700;
  text-anchor: middle;
  fill: #fff;
}
.n rect { fill: #5d8fce; stroke: #a9c8ec; }
.e rect { fill: #4f9a52; stroke: #a5cfa5; }
.r rect { fill: #f7f7f4; stroke: #666; }
.shield.r text { fill: #333; }
.pin-body { fill: #4a6f8b; stroke: #fff; stroke-width: 1; }
.pin text {
  font-size: 19px;
  font-weight: 600;
  text-anchor: middle;
  fill: #fff;
}
.here {
  font: 800 15px Inter, sans-serif;
  fill: #1b4088;
}
.bottom {
  flex: 1;
  padding: 50px 0 24px;
  background: #f9f9f9;
  text-align: center;
  font-size: 13px;
  color: #777;
}
.bottom-nav {
  display: flex;
  justify-content: center;
  gap: 12px;
  font-size: 14px;
  letter-spacing: 2px;
  text-transform: uppercase;
}
.bottom p {
  margin: 26px 0 0;
}
</style>
